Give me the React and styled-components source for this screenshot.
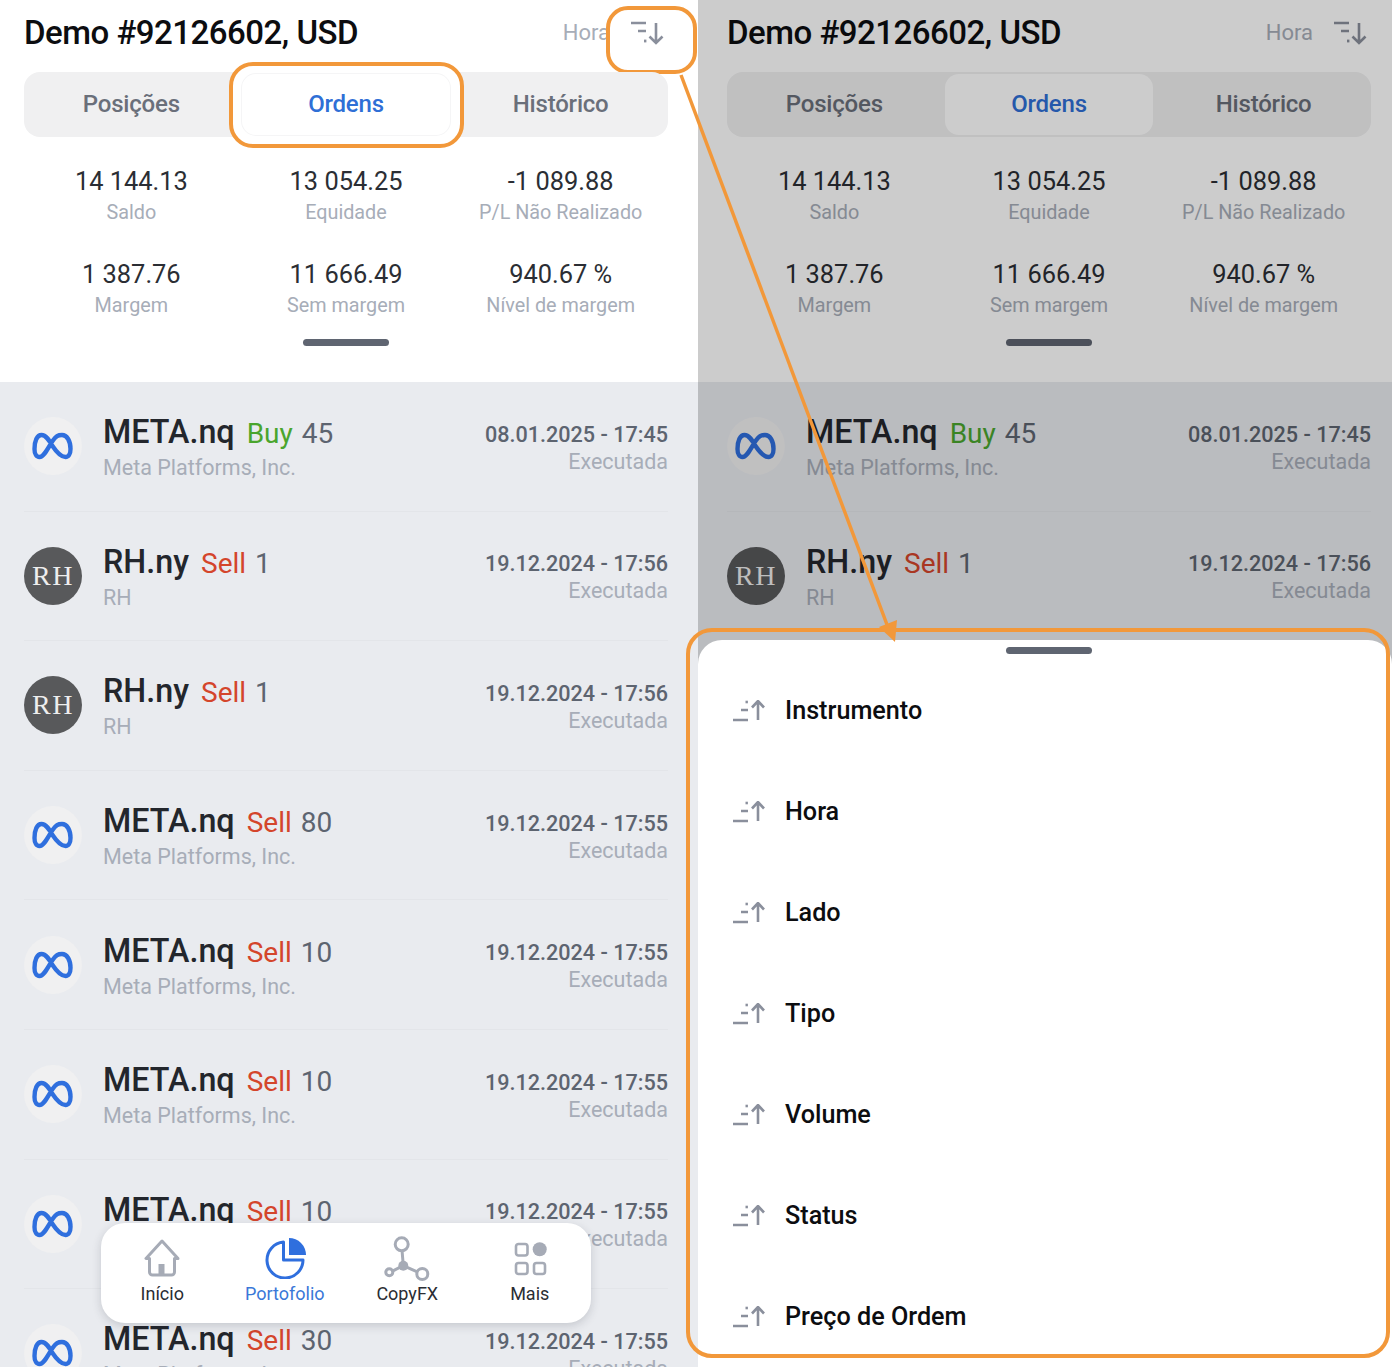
import React from 'react';
import styled, { createGlobalStyle } from 'styled-components';

const ORANGE = '#f2983a';

const stats = [
  ['14 144.13', 'Saldo'],
  ['13 054.25', 'Equidade'],
  ['-1 089.88', 'P/L Não Realizado'],
  ['1 387.76', 'Margem'],
  ['11 666.49', 'Sem margem'],
  ['940.67 %', 'Nível de margem'],
];

const orders = [
  ['meta', 'Buy', '45', '08.01.2025 - 17:45'],
  ['rh', 'Sell', '1', '19.12.2024 - 17:56'],
  ['rh', 'Sell', '1', '19.12.2024 - 17:56'],
  ['meta', 'Sell', '80', '19.12.2024 - 17:55'],
  ['meta', 'Sell', '10', '19.12.2024 - 17:55'],
  ['meta', 'Sell', '10', '19.12.2024 - 17:55'],
  ['meta', 'Sell', '10', '19.12.2024 - 17:55'],
  ['meta', 'Sell', '30', '19.12.2024 - 17:55'],
];

const sortFields = ['Instrumento', 'Hora', 'Lado', 'Tipo', 'Volume', 'Status', 'Preço de Ordem'];

const SortDownIcon = () => (
  <svg width="33" height="24" viewBox="0 0 33 24" fill="none" stroke="#8a8f9c" strokeWidth="2.6">
    <path d="M0 2h15M7 10h8" />
    <path d="M13 20h2.4" strokeWidth="2.8" />
    <path d="M25 2v20M18.500 15.500l6.500 6.500 6.500-6.500" />
  </svg>
);

const SortUpIcon = () => (
  <svg width="32" height="22" viewBox="0 0 32 22" fill="none" stroke="#8a8f9c" strokeWidth="2.6">
    <path d="M0 20h15M8 10h7" />
    <path d="M12.500 2h2.400" strokeWidth="2.600" />
    <path d="M25 20V1M19 7.500L25 1l6 6.500" />
  </svg>
);

const MetaLogo = () => (
  <svg width="41" height="28" viewBox="0 0 41 28" fill="none" stroke="#2f6fde" strokeWidth="4.4">
    <path d="M20.500 14C17 8 14 3 9.500 3 5 3 2.500 9 2.500 17c0 5 2 8 5 8 4.500 0 8.500-9 13-16 3.500-5 5.500-6 9.500-6 5 0 8.500 6 8.500 14 0 5-2 8-5 8-5 0-9-5-13-11Z" />
  </svg>
);

const HomeIcon = () => (
  <svg width="37" height="38" viewBox="0 0 37 38" fill="none" stroke="#a6abb6" strokeWidth="3" strokeLinejoin="round">
    <path d="M18 2 2 19.500h3.500V33a3 3 0 0 0 3 3h19a3 3 0 0 0 3-3V19.500H34Z" />
    <rect x="14.500" y="25" width="6" height="11" fill="#a6abb6" stroke="none" />
  </svg>
);

const PortfolioIcon = () => (
  <svg width="44" height="42" viewBox="0 0 44 42" fill="none">
    <path d="M20.500 5.100A18 18 0 1 0 40 23H20.500Z" stroke="#2f6fde" strokeWidth="3" strokeLinejoin="round" />
    <path d="M26 1a17 17 0 0 1 17 17H26Z" fill="#2f6fde" />
  </svg>
);

const CopyIcon = () => (
  <svg width="46" height="46" viewBox="0 0 46 46" fill="none" stroke="#a6abb6" strokeWidth="3">
    <path d="M18 15l1.300 15.700M19.300 30.700 6 37.300M19.300 30.700 38 39" />
    <circle cx="17.700" cy="9.300" r="6.500" fill="#fff" />
    <circle cx="19.300" cy="30.700" r="5" fill="#a6abb6" stroke="none" />
    <circle cx="5.300" cy="37.300" r="3.500" fill="#fff" />
    <circle cx="38.300" cy="39" r="5.500" fill="#fff" />
  </svg>
);

const MoreIcon = () => (
  <svg width="36" height="36" viewBox="0 0 36 36" fill="none" stroke="#a6abb6" strokeWidth="2.600">
    <rect x="4" y="4" width="11.500" height="11.500" rx="2.500" />
    <rect x="4" y="23" width="11.500" height="11" rx="2.500" />
    <rect x="22" y="23" width="11" height="11" rx="2.500" />
    <circle cx="27.700" cy="9.300" r="7" fill="#a6abb6" stroke="none" />
  </svg>
);

const Arrow = () => (
  <ArrowLayer width="1392" height="1370" viewBox="0 0 1392 1370">
    <path d="M681 75 889 630" stroke={ORANGE} strokeWidth="3.500" fill="none" />
    <path d="M895 642 879 627 897 620Z" fill={ORANGE} />
  </ArrowLayer>
);

const Order = ({ order }) => {
  const [logo, side, volume, date] = order;
  const isMeta = logo === 'meta';
  return (
    <Row>
      <Avatar $dark={!isMeta}>{isMeta ? <MetaLogo /> : 'RH'}</Avatar>
      <RowMain>
        <RowTitle>
          <Symbol>{isMeta ? 'META.nq' : 'RH.ny'}</Symbol>
          <Side $buy={side === 'Buy'}>{side}</Side>
          <Volume>{volume}</Volume>
        </RowTitle>
        <Company>{isMeta ? 'Meta Platforms, Inc.' : 'RH'}</Company>
      </RowMain>
      <RowMeta>
        <OrderDate>{date}</OrderDate>
        <OrderStatus>Executada</OrderStatus>
      </RowMeta>
    </Row>
  );
};

// The right screen only shows what the sheet does not cover, so it gets fewer rows and no nav.
const Phone = ({ highlighted, left, right, rows, withNav }) => (
  <Screen>
    <Top $left={left} $right={right}>
      <Header>
        <Title>Demo #92126602, USD</Title>
        <SortLabel>Hora</SortLabel>
        <SortButton $ringed={highlighted}>
          <SortDownIcon />
        </SortButton>
      </Header>
      <TabBar>
        <Tab>Posições</Tab>
        <Tab $active $ringed={highlighted}>Ordens</Tab>
        <Tab>Histórico</Tab>
      </TabBar>
      <Stats>
        {stats.map(([value, label]) => (
          <Stat key={label}>
            <StatValue>{value}</StatValue>
            <StatLabel>{label}</StatLabel>
          </Stat>
        ))}
      </Stats>
      <Handle />
    </Top>
    <List $left={left} $right={right}>
      {orders.slice(0, rows).map((order, i) => (
        <Order key={i} order={order} />
      ))}
    </List>
    {withNav && (
      <Nav>
        <NavItem><NavIcon><HomeIcon /></NavIcon>Início</NavItem>
        <NavItem $active><NavIcon><PortfolioIcon /></NavIcon>Portofolio</NavItem>
        <NavItem><NavIcon><CopyIcon /></NavIcon>CopyFX</NavItem>
        <NavItem><NavIcon><MoreIcon /></NavIcon>Mais</NavItem>
      </Nav>
    )}
  </Screen>
);

const App = () => (
  <Page>
    <GlobalStyle />
    <Phone highlighted left={24} right={30} rows={8} withNav />
    <RightColumn>
      <Phone left={29} right={21} rows={2} />
      <Dim />
      <Sheet>
        <SheetHandle />
        {sortFields.map((field) => (
          <SheetItem key={field}>
            <SortUpIcon />
            <span>{field}</span>
          </SheetItem>
        ))}
      </Sheet>
    </RightColumn>
    <SheetRing />
    <Arrow />
  </Page>
);

const GlobalStyle = createGlobalStyle`
  html, body {
    margin: 0;
    background: #fff;
  }
  body {
    font-family: Roboto, "Liberation Sans", sans-serif;
  }
`;

const Page = styled.div`
  position: relative;
  display: grid;
  grid-template-columns: 698px 694px;
  width: 1392px;
  height: 1370px;
  overflow: hidden;
`;
const RightColumn = styled.div`
  position: relative;
  height: 1367px;
  overflow: hidden;
`;
const Screen = styled.div`
  position: relative;
  height: 1367px;
  overflow: hidden;
  background: #fff;
`;
const Top = styled.div`
  height: 382px;
  box-sizing: border-box;
  padding: 0 ${(p) => p.$right}px 0 ${(p) => p.$left}px;
`;
const Header = styled.div`
  display: flex;
  align-items: center;
  height: 64px;
  margin-bottom: 8px;
`;
const Title = styled.h1`
  flex: 1;
  margin: 0;
  font-size: 33px;
  font-weight: 500;
  letter-spacing: -0.5px;
  color: #0c0d10;
`;
const SortLabel = styled.span`
  font-size: 22px;
  color: #a7adb8;
`;
const SortButton = styled.div`
  position: relative;
  box-sizing: border-box;
  align-self: flex-start;
  width: 91px;
  height: 68px;
  margin: 6px -29px -10px -4px;
  padding: 11px 0 0 21px;
  border: 4px solid ${(p) => (p.$ringed ? ORANGE : 'transparent')};
  border-radius: 22px;
  background: ${(p) => (p.$ringed ? '#fff' : 'transparent')};
`;
const TabBar = styled.div`
  position: relative;
  isolation: isolate;
  display: grid;
  grid-template-columns: repeat(3, 1fr);
  height: 65px;
  box-sizing: border-box;
  padding: 2px 0;
  border-radius: 16px;
  background: #f0f0f1;
`;
const Tab = styled.div`
  position: relative;
  display: flex;
  align-items: center;
  justify-content: center;
  margin: 0 3px;
  padding-bottom: 2px;
  border-radius: 14px;
  font-size: 24px;
  font-weight: 500;
  letter-spacing: -0.2px;
  color: ${(p) => (p.$active ? '#2f6fd6' : '#6a6f7a')};
  background: ${(p) => (p.$active ? '#fff' : 'transparent')};
  ${(p) => p.$ringed && `
    box-shadow: 0 0 0 1px #f5f5f6;
    &::after {
      content: '';
      position: absolute;
      inset: -12px -14px -13px -13px;
      z-index: -1;
      border: 4px solid ${ORANGE};
      border-radius: 24px;
      background: #fff;
    }
  `}
`;
const Stats = styled.div`
  display: grid;
  grid-template-columns: repeat(3, 1fr);
  row-gap: 31.5px;
  margin-top: 28px;
`;
const Stat = styled.div`
  display: flex;
  flex-direction: column;
  align-items: center;
  gap: 1.5px;
`;
const StatValue = styled.div`
  font-size: 25.4px;
  line-height: 32px;
  color: #2b2e34;
`;
const StatLabel = styled.div`
  font-size: 19.8px;
  line-height: 28px;
  color: #a7adb8;
`;
const Handle = styled.div`
  width: 86px;
  height: 7px;
  margin: 19px auto 0;
  border-radius: 4px;
  background: #5f6571;
`;
const List = styled.div`
  box-sizing: border-box;
  height: 985px;
  padding: 0 ${(p) => p.$right}px 0 ${(p) => p.$left}px;
  background: #e9ebef;
`;
const Row = styled.div`
  display: flex;
  align-items: center;
  box-sizing: border-box;
  height: 129.6px;
  border-bottom: 1px solid #e3e5e9;
`;
const Avatar = styled.div`
  flex: none;
  display: flex;
  align-items: center;
  justify-content: center;
  width: 58px;
  height: 58px;
  margin-right: 21px;
  padding-right: ${(p) => (p.$dark ? 0 : 2)}px;
  box-sizing: border-box;
  border-radius: 50%;
  font-family: "Liberation Serif", serif;
  font-size: 28px;
  letter-spacing: 1.500px;
  color: #eeeeee;
  background: ${(p) => (p.$dark ? '#58595b' : '#f0f0f1')};
`;
const RowMain = styled.div`
  flex: 1;
  min-width: 0;
  padding-top: 2px;
`;
const RowTitle = styled.div`
  display: flex;
  align-items: baseline;
  line-height: 40px;
`;
const Symbol = styled.span`
  margin-right: 12px;
  font-size: 32.300px;
  font-weight: 500;
  color: #23262c;
`;
const Side = styled.span`
  margin-right: 9px;
  font-size: 28px;
  color: ${(p) => (p.$buy ? '#4aa52d' : '#d4452b')};
`;
const Volume = styled.span`
  font-size: 28px;
  color: #5d6470;
`;
const Company = styled.div`
  font-size: 21.500px;
  line-height: 28px;
  color: #a7adb8;
`;
const RowMeta = styled.div`
  display: flex;
  flex-direction: column;
  align-items: flex-end;
  margin-top: 3px;
`;
const OrderDate = styled.div`
  font-size: 21.600px;
  font-weight: 500;
  line-height: 27px;
  color: #5d6470;
`;
const OrderStatus = styled.div`
  font-size: 21.500px;
  line-height: 27px;
  color: #a7adb8;
`;
const Nav = styled.div`
  position: absolute;
  left: 101px;
  top: 1223px;
  display: grid;
  grid-template-columns: repeat(4, 1fr);
  width: 490px;
  height: 100px;
  border-radius: 24px;
  background: #fff;
  box-shadow: 0 3px 10px rgba(40, 45, 60, 0.18);
`;
const NavItem = styled.div`
  display: flex;
  flex-direction: column;
  align-items: center;
  font-size: 18px;
  line-height: 24px;
  color: ${(p) => (p.$active ? '#3a78d8' : '#2a2d33')};
`;
const NavIcon = styled.div`
  display: flex;
  align-items: center;
  justify-content: center;
  height: 46px;
  margin: 12px 0 1px;
`;
const Dim = styled.div`
  position: absolute;
  inset: 0;
  background: rgba(0, 0, 0, 0.2);
`;
const Sheet = styled.div`
  position: absolute;
  left: 0;
  right: 0;
  top: 640px;
  bottom: 0;
  border-radius: 24px 24px 0 0;
  background: #fff;
`;
const SheetHandle = styled.div`
  width: 86px;
  height: 7px;
  margin: 7px 0 6px 308px;
  border-radius: 4px;
  background: #5f6571;
`;
const SheetItem = styled.div`
  display: flex;
  align-items: center;
  gap: 20px;
  height: 101px;
  padding-left: 35px;
  font-size: 25.200px;
  font-weight: 500;
  color: #0c0d10;
  svg {
    margin-top: 1px;
  }
`;
const SheetRing = styled.div`
  position: absolute;
  left: 686px;
  top: 628px;
  width: 704px;
  height: 730px;
  box-sizing: border-box;
  border: 4px solid ${ORANGE};
  border-radius: 26px;
  pointer-events: none;
`;
const ArrowLayer = styled.svg`
  position: absolute;
  left: 0;
  top: 0;
  pointer-events: none;
`;

export default App;
